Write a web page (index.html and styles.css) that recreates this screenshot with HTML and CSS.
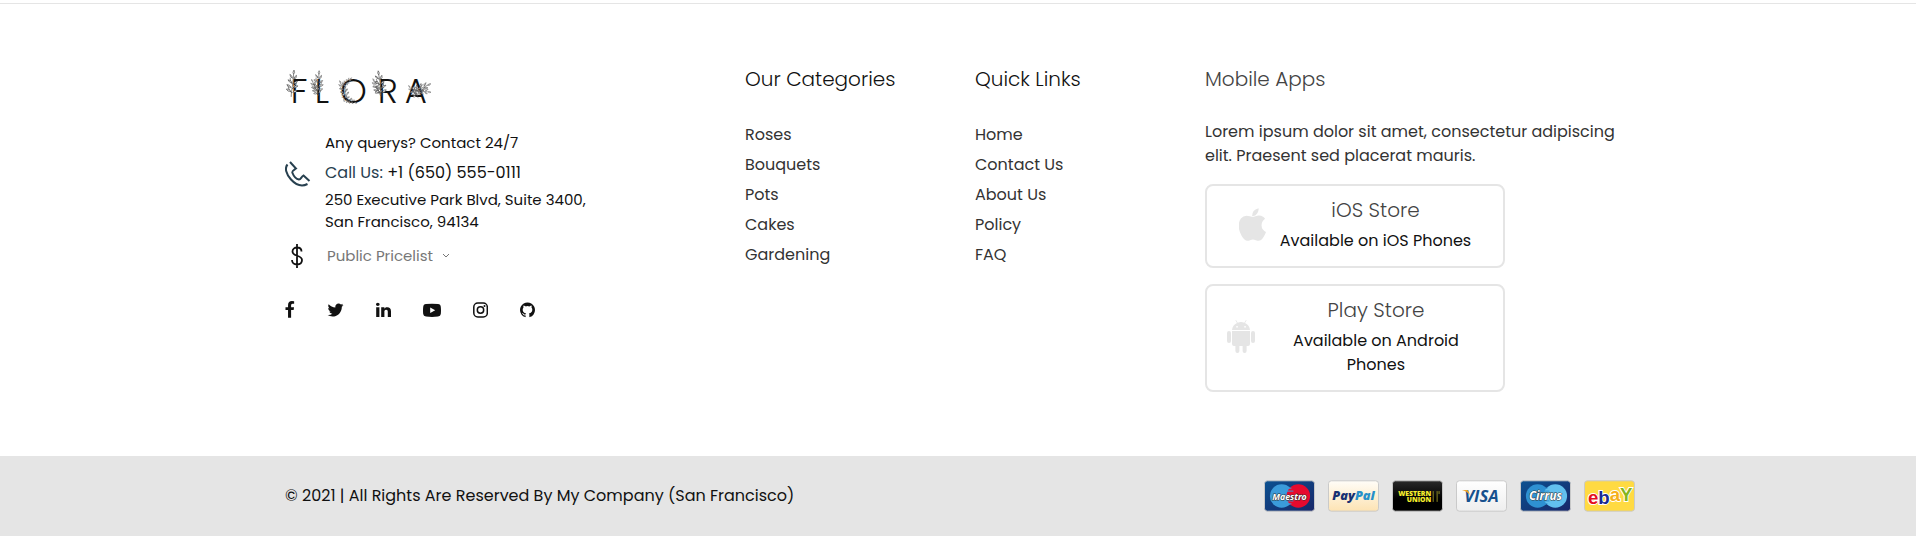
FILE: index.html
```html
<!DOCTYPE html>
<html lang="en">
<head>
<meta charset="utf-8">
<meta name="viewport" content="width=device-width, initial-scale=1">
<title>Flora</title>
<link rel="stylesheet" href="styles.css">
</head>
<body>
<footer class="footer">
  <div class="footer-main">
    <div class="container columns">
      <section class="brand">
        <a class="logo" href="#" aria-label="Flora home">
          <svg viewBox="45 40 450 120" width="150" height="40">
            <defs>
              <g id="sprig" class="sprig">
                <path d="M0 42C-2 25 2 8 0-26M0 30C-8 22-12 16-14 6M0 18C8 12 10 4 12-4M0 4C-7-2-8-8-9-15"/>
                <path d="M0-26q-5-6 0-13q5 7 0 13zM-2-14q-8-3-9-11q8 3 9 11zM3-12q8-3 6-12q-7 4-6 12zM-2 0q-9 0-13-8q9-1 13 8zM2 2q8 0 12-9q-9 0-12 9zM-3 14q-9 1-14-7q9-2 14 7zM3 14q8 1 14-7q-9-2-14 7zM-3 26q-10 2-14-6q9-4 14 6zM3 28q9 1 13-7q-9-3-13 7z"/>
              </g>
            </defs>
            <text class="wordmark" y="142" x="62 134 210 323 404">FLORA</text>
            <use href="#sprig" transform="translate(68 82) rotate(6)"/>
            <use href="#sprig" transform="translate(145 80) rotate(4) scale(.9)"/>
            <use href="#sprig" transform="translate(136 96) rotate(-24) scale(.7)"/>
            <use href="#sprig" transform="translate(220 100) rotate(-24) scale(.7)"/>
            <use href="#sprig" transform="translate(231 79) rotate(48) scale(.5)"/>
            <use href="#sprig" transform="translate(238 134) rotate(112) scale(.6)"/>
            <use href="#sprig" transform="translate(330 84) rotate(-8)"/>
            <use href="#sprig" transform="translate(320 94) rotate(-24) scale(.7)"/>
            <use href="#sprig" transform="translate(452 98) rotate(66) scale(.85)"/>
            <use href="#sprig" transform="translate(430 108) rotate(-38) scale(.6)"/>
            <use href="#sprig" transform="translate(456 106) rotate(98) scale(.7)"/>
          </svg>
        </a>
        <div class="contact">
          <svg class="phone" viewBox="0 0 26 26" width="26" height="26" aria-hidden="true"><path d="M5 1L11 7.500C8 9.500 6.500 10 7.500 12C9 16 11 18 14 18.500C16 18.500 16 16 18.500 14.500L24.500 20M2.500 3.500C-.5 7 1 13 6 18.500C11 24 16.500 26 22.500 23"/></svg>
          <div class="contact-text">
            <p class="small">Any querys? Contact 24/7</p>
            <p class="call"><span>Call Us:</span> <a href="tel:+16505550111">+1 (650) 555-0111</a></p>
            <address class="small">250 Executive Park Blvd, Suite 3400,<br>San Francisco, 94134</address>
          </div>
        </div>
        <div class="pricelist">
          <svg class="dollar" viewBox="0 0 12 26" width="12" height="26" aria-hidden="true"><path d="M6 1v24M10.500 8.500C10.500 5.500 8.500 4.500 6 4.500S1.500 6 1.500 8.500C1.500 14 11 11.500 11 17C11 20 9 21.500 6 21.500S1 20 1 17"/></svg>
          <select aria-label="Pricelist"><option>Public Pricelist</option></select>
          <svg class="caret" viewBox="0 0 8 6" width="8" height="6" aria-hidden="true"><path d="M1 1l3 3 3-3"/></svg>
        </div>
        <nav class="social" aria-label="Social media">
          <a href="#" aria-label="Facebook"><svg viewBox="430 0 1000 1792" width="10" height="18"><path d="M1343 12v264h-157q-86 0-116 36t-30 108v189h293l-39 296h-254v759h-306v-759h-255v-296h255v-218q0-186 104-288.5t277-102.500q147 0 228 12z"/></svg></a>
          <a href="#" aria-label="Twitter"><svg viewBox="50 0 1692 1792" width="17" height="18"><path d="M1684 408q-67 98-162 167 1 14 1 42 0 130-38 259.500t-115.500 248.500-184.500 210.500-258 146-323 54.500q-271 0-496-145 35 4 78 4 225 0 401-138-105-2-188-64.500t-114-159.500q33 5 61 5 43 0 85-11-112-23-185.500-111.500t-73.500-205.500v-4q68 38 146 41-66-44-105-115t-39-154q0-88 44-163 121 149 294.500 238.500t371.500 99.500q-8-38-8-74 0-134 94.500-228.500t228.500-94.500q140 0 236 102 109-21 205-78-37 115-142 178 93-10 186-50z"/></svg></a>
          <a href="#" aria-label="LinkedIn"><svg viewBox="128 0 1536 1792" width="15" height="18"><path d="M477 625v991h-330v-991h330zm21-306q1 73-50.500 122t-135.500 49h-2q-82 0-132-49t-50-122q0-74 51.500-122.500t134.500-48.500 133 48.500 51 122.500zm1166 729v568h-329v-530q0-105-40.500-164.500t-126.500-59.500q-63 0-105.500 34.500t-63.500 85.500q-11 30-11 81v553h-329q2-399 2-647t-1-296l-1-48h329v144h-2q20-32 41-56t56.500-52 87-43.500 114.500-15.500q171 0 275 113.500t104 332.500z"/></svg></a>
          <a href="#" aria-label="YouTube"><svg viewBox="0 0 18 18" width="18" height="18"><path fill-rule="evenodd" d="M3 3Q9 2.400 15 3Q17.600 3 17.800 6Q18.200 9.500 17.800 13Q17.600 15.400 15 15.600Q9 16.200 3 15.600Q.4 15.400.2 13Q-.2 9.500.2 6Q.4 3 3 3zM7.200 6.500v5.400l5-2.700z"/></svg></a>
          <a href="#" aria-label="Instagram"><svg class="insta" viewBox="0 0 15 18" width="15" height="18"><rect x=".8" y="2" width="13.500" height="14" rx="4"/><circle cx="7.500" cy="9" r="3.200"/><circle class="dot" cx="11.500" cy="5" r="1"/></svg></a>
          <a href="#" aria-label="GitHub"><svg viewBox="128 0 1536 1792" width="15" height="18"><path d="M896 128q209 0 385.500 103t279.500 279.500 103 385.500q0 251-146.500 451.500t-378.500 277.500q-27 5-40-7t-13-30q0-3 .5-76.500t.5-134.500q0-97-52-142 57-6 102.500-18t94-39 81-66.500 53-105 20.500-150.500q0-119-79-206 37-91-8-204-28-9-81 11t-92 44l-38 24q-93-26-192-26t-192 26q-16-11-42.500-27t-83.500-38.500-85-13.500q-45 113-8 204-79 87-79 206 0 85 20.500 150t52.500 105 80.500 67 94 39 102.500 18q-39 36-49 103-21 10-45 15t-57 5-65.500-21.500-55.500-62.500q-19-32-48.500-52t-49.500-24l-20-3q-21 0-29 4.500t-5 11.500 9 14 13 12l7 5q22 10 43.500 38t31.500 51l10 23q13 38 44 61.500t67 30 69.500 7 55.500-3.500l23-4q0 38 .5 88.500t.5 54.500q0 18-13 30t-40 7q-232-77-378.500-277.500t-146.500-451.500q0-209 103-385.500t279.500-279.500 385.500-103z"/></svg></a>
        </nav>
      </section>

      <nav class="links" aria-labelledby="categories">
        <h2 id="categories">Our Categories</h2>
        <ul>
          <li><a href="#">Roses</a></li>
          <li><a href="#">Bouquets</a></li>
          <li><a href="#">Pots</a></li>
          <li><a href="#">Cakes</a></li>
          <li><a href="#">Gardening</a></li>
        </ul>
      </nav>

      <nav class="links" aria-labelledby="quick">
        <h2 id="quick">Quick Links</h2>
        <ul>
          <li><a href="#">Home</a></li>
          <li><a href="#">Contact Us</a></li>
          <li><a href="#">About Us</a></li>
          <li><a href="#">Policy</a></li>
          <li><a href="#">FAQ</a></li>
        </ul>
      </nav>

      <section class="apps">
        <h2>Mobile Apps</h2>
        <p class="intro">Lorem ipsum dolor sit amet, consectetur adipiscing elit. Praesent sed placerat mauris.</p>
        <a class="store" href="#">
          <svg viewBox="208 0 1377 1664" width="27" height="33" aria-hidden="true"><path d="M1585 1215q-39 125-123 250-129 196-257 196-49 0-140-32-86-32-151-32-61 0-142 33-81 34-132 34-152 0-301-259-147-261-147-503 0-228 113-374 113-144 284-144 72 0 177 30 104 30 138 30 45 0 143-34 102-34 173-34 119 0 213 65 52 36 104 100-79 67-114 118-65 94-65 207 0 124 69 223t158 126zm-376-1173q0 61-29 136-30 75-93 138-54 54-108 72-37 11-104 17 3-149 78-257 74-107 250-148 1 3 2.500 11t2.500 11q0 4 .5 10t.5 10z"/></svg>
          <span class="store-text"><strong>iOS Store</strong><span>Available on iOS Phones</span></span>
        </a>
        <a class="store" href="#">
          <svg viewBox="0 0 28 33" width="28" height="33" aria-hidden="true"><path fill-rule="evenodd" d="M5 10Q5.500 5 10 3L8.400.3l.6-.3 1.700 2.700Q14 1.500 17.300 2.700L19 0l.6.3L18 3Q22.500 5 23 10zM10 6a.8.800 0 1 0 .1 0zM18 6a.8.800 0 1 0 .1 0z"/><path d="M5 11H23V24Q23 26 21 26H19.600V31Q19.600 33 17.600 33T15.600 31V26H12.400V31Q12.400 33 10.400 33T8.400 31V26H7Q5 26 5 24z"/><rect x="0" y="11" width="4" height="12" rx="2"/><rect x="24" y="11" width="4" height="12" rx="2"/></svg>
          <span class="store-text"><strong>Play Store</strong><span>Available on Android Phones</span></span>
        </a>
      </section>
    </div>
  </div>

  <div class="footer-bottom">
    <div class="container bottom-row">
      <p>© 2021 | All Rights Are Reserved By My Company (San Francisco)</p>
      <ul class="cards">
        <li><svg viewBox="0 0 52 32" role="img" aria-label="Maestro">
          <defs><linearGradient id="navy" x2="1" y2="1"><stop stop-color="#0b5191"/><stop offset="1" stop-color="#182769"/></linearGradient></defs>
          <rect class="frame" x=".5" y=".5" width="51" height="31" rx="3" fill="url(#navy)"/><circle cx="18" cy="16" r="12" fill="#3b9bda"/><circle cx="35" cy="16" r="12" fill="#e60a2e"/><path d="M22 8h6M22 11h8M22 21h8M22 24h6" stroke="#3b9bda"/><text class="card-name outline" x="26" y="20" fill="#fff" font-size="9">Maestro</text></svg></li>
        <li><svg viewBox="0 0 52 32" role="img" aria-label="PayPal">
          <defs><linearGradient id="cream" x2="0" y2="1"><stop stop-color="#fffdf8"/><stop offset="1" stop-color="#fde3b3"/></linearGradient></defs>
          <rect class="frame" x=".5" y=".5" width="51" height="31" rx="3" fill="url(#cream)"/><text class="card-name paypal" x="26" y="20" font-size="13"><tspan fill="#183173">Pay</tspan><tspan fill="#2790c9">Pal</tspan></text></svg></li>
        <li><svg viewBox="0 0 52 32" role="img" aria-label="Western Union">
          <defs><linearGradient id="black" x2="0" y2="1"><stop stop-color="#292929"/><stop offset=".6" stop-color="#000"/></linearGradient></defs>
          <rect class="frame" x=".5" y=".5" width="51" height="31" rx="3" fill="url(#black)"/><text class="union" x="40" y="16">WESTERN</text><text class="union" x="40" y="22">UNION</text><path d="M42 11v11M46 11v11M48 11v3" stroke="#8c8923"/></svg></li>
        <li><svg viewBox="0 0 52 32" role="img" aria-label="Visa">
          <defs><linearGradient id="white" x2="0" y2="1"><stop stop-color="#fff"/><stop offset="1" stop-color="#eee"/></linearGradient></defs>
          <rect class="frame" x=".5" y=".5" width="51" height="31" rx="3" fill="url(#white)"/><text class="card-name" x="26" y="22" fill="#17518e" font-size="17">VISA</text><path d="M6 10h5q2 0 3 5q-3-4-8-5z" fill="#eda32a"/></svg></li>
        <li><svg viewBox="0 0 52 32" role="img" aria-label="Cirrus">
          <rect class="frame" x=".5" y=".5" width="51" height="31" rx="3" fill="url(#navy)"/><circle cx="18" cy="16" r="12" fill="#2e91d2"/><circle cx="36" cy="16" r="12" fill="#62c0ee"/><path d="M22 8h6M22 11h8M22 21h8M22 24h6" stroke="#2e91d2"/><text class="card-name outline" x="26" y="20" fill="#fff" font-size="12">Cirrus</text></svg></li>
        <li><svg viewBox="0 0 52 32" role="img" aria-label="eBay">
          <rect class="frame" x=".5" y=".5" width="51" height="31" rx="3" fill="#ffda42"/><text class="ebay" x="4" y="24"><tspan fill="#e5101d">e</tspan><tspan fill="#1a2b91">b</tspan><tspan dy="-3" fill="#f6b01a">a</tspan><tspan fill="#86b51c">Y</tspan></text></svg></li>
      </ul>
    </div>
  </div>
</footer>
</body>
</html>
```
FILE: styles.css
```css
* { box-sizing: border-box; }

body {
  margin: 0;
  background: #fff;
  color: #111;
  font-family: Poppins, Inter, "Open Sans", sans-serif;
  font-size: 16px;
  line-height: 24px;
}

h2, p, ul { margin: 0; padding: 0; }
ul { list-style: none; }
a { color: inherit; text-decoration: none; }
svg { display: block; flex: none; }

.footer { padding-top: 3px; }

.footer-main {
  border-top: 1px solid #e5e5e5;
  padding: 62px 0 64px 4px;
}

.container {
  max-width: 1350px;
  margin: 0 auto;
}

.columns {
  display: grid;
  grid-template-columns: 460px 230px 230px 1fr;
}

h2 {
  font-size: 20px;
  font-weight: 300;
  line-height: 26px;
}

/* brand column */
.brand { padding-top: 3px; }
.logo { display: block; width: 150px; }
.logo svg { overflow: visible; }
.wordmark {
  font-family: Poppins, Lato, sans-serif;
  font-size: 102px;
  font-weight: 300;
  fill: #111;
}
.sprig {
  fill: #eee;
  stroke: #222;
  stroke-width: 1.500;
}

.contact {
  display: flex;
  align-items: flex-start;
  gap: 14px;
  margin-top: 23px;
}
.phone {
  margin-top: 29px;
  fill: none;
  stroke: #27404f;
  stroke-width: 2;
}
.contact-text { line-height: 22px; }
.small { font-size: 15px; font-style: normal; }
.call { padding: 8px 0 5px; line-height: 22px; }
.call span { color: #27404f; }

.pricelist {
  display: flex;
  align-items: center;
  margin-top: 10px;
  padding-left: 6px;
}
.dollar { fill: none; stroke: #111; stroke-width: 1.800; }
select {
  appearance: none;
  margin: 0 9px 0 24px;
  padding: 0;
  border: 0;
  background: none;
  color: #777;
  font: inherit;
  font-size: 15px;
}
.caret { fill: none; stroke: #777; }

.social {
  display: flex;
  gap: 32px;
  margin-top: 32px;
  fill: #111;
}
.insta { fill: none; stroke: #111; stroke-width: 1.500; }
.insta .dot { fill: #111; stroke: none; }

/* link columns */
.links ul { margin-top: 28px; }
.links li { line-height: 30px; color: #333; }

/* apps column */
.apps h2 { color: #444; }
.intro { margin: 28px 0 16px; color: #333; }

.store {
  display: flex;
  align-items: center;
  justify-content: center;
  max-width: 300px;
  margin-bottom: 16px;
  padding: 10px 6px 13px 20px;
  border: 2px solid #e5e5e5;
  border-radius: 8px;
}
.store:last-child { margin-bottom: 0; }
.store svg { fill: #e5e5e5; }
.store-text {
  display: flex;
  flex-direction: column;
  padding: 0 14px;
  text-align: center;
}
.store strong {
  margin-bottom: 5px;
  color: #444;
  font-size: 20px;
  font-weight: 300;
  line-height: 28px;
}

/* bottom bar */
.footer-bottom {
  padding: 24px 0 24px 4px;
  background: #e5e5e5;
}
.bottom-row {
  display: flex;
  align-items: center;
  justify-content: space-between;
}
.cards { display: flex; gap: 13px; }
.cards svg { width: 51px; height: 32px; }
.frame { stroke: #c9c9c9; }
.card-name {
  font-family: "Open Sans", sans-serif;
  font-style: italic;
  font-weight: 700;
  text-anchor: middle;
}
.paypal { font-weight: 800; }
.outline { stroke: #333; stroke-width: 1; paint-order: stroke; }
.union {
  font-family: "Open Sans", sans-serif;
  font-size: 7px;
  font-weight: 800;
  text-anchor: end;
  fill: #f6ee2c;
}
.ebay {
  font-family: "Liberation Sans", sans-serif;
  font-size: 19px;
  font-weight: 700;
  stroke: #fff;
  stroke-width: 2;
  paint-order: stroke;
}
```
